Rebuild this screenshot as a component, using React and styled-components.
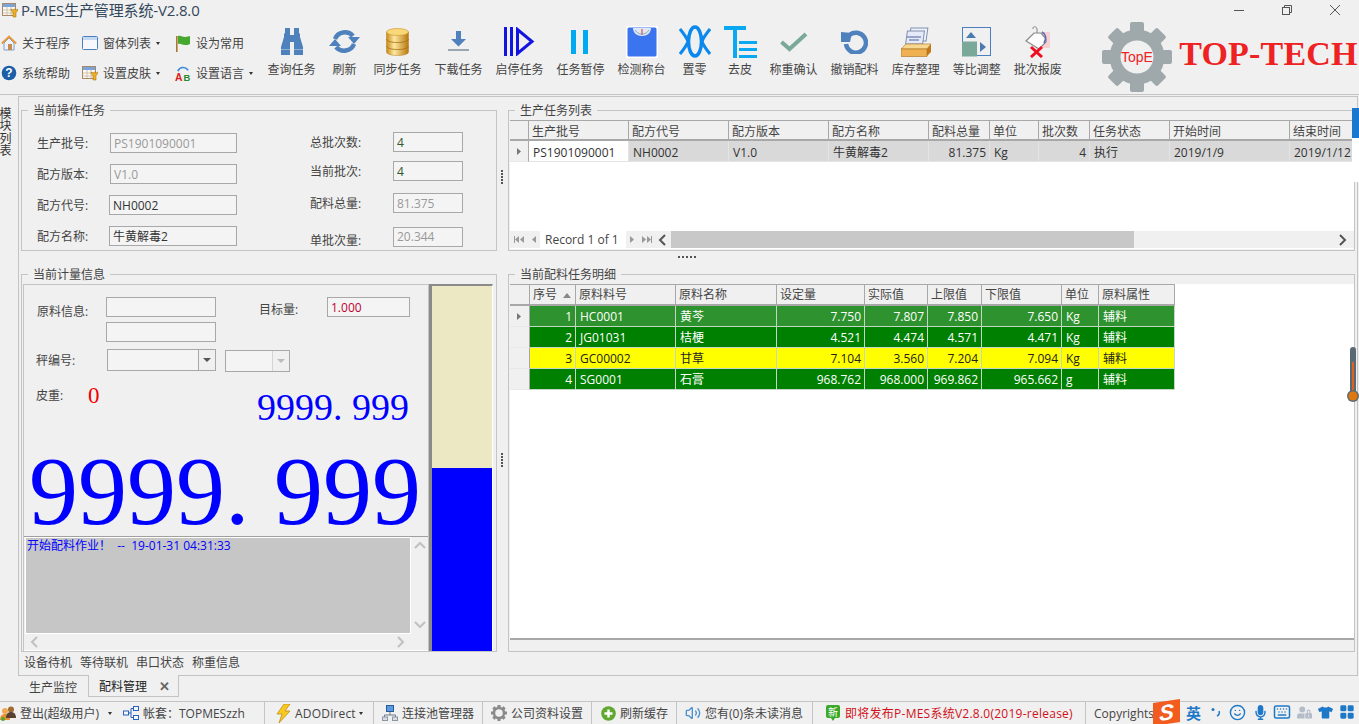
import React from "react";
import styled, { createGlobalStyle, css } from "styled-components";
import { Volume2, Smile, Keyboard, LayoutGrid } from "lucide-react";
import { FaMicrophone, FaTshirt, FaUserLock } from "react-icons/fa";

const GlobalStyle = createGlobalStyle`
  * { box-sizing: border-box; }
  html, body { margin: 0; padding: 0; background: #f0f0f0; }
  body {
    font-family: "Open Sans", "Noto Sans CJK SC", sans-serif;
    font-size: 12px;
    color: #444;
    overflow: hidden;
  }
`;

const line = "#c4c4c4";
const fieldLine = "#a8a8a8";

const Page = styled.div`
  position: relative;
  display: flex;
  flex-direction: column;
  width: 1359px;
  height: 724px;
  overflow: hidden;
`;

/* title bar */
const TitleBar = styled.div`
  display: flex;
  align-items: center;
  height: 20px;
  padding-left: 2px;
`;

const TitleText = styled.div`
  margin-left: 3px;
  font-size: 15px;
  line-height: 18px;
  letter-spacing: -0.15px;
  color: #33475b;
  white-space: nowrap;
`;

const WindowButtons = styled.div`
  display: flex;
  margin-left: auto;
`;

const WindowButton = styled.div`
  display: flex;
  align-items: center;
  justify-content: center;
  width: 48px;
  height: 18px;
`;

/* ribbon */
const Ribbon = styled.div`
  display: flex;
  height: 75px;
  border-bottom: 1px solid ${line};
`;

const QuickGrid = styled.div`
  display: grid;
  grid-template-columns: 81px 93px 87px;
  grid-template-rows: 30px 30px;
  width: 261px;
  padding: 8px 0 0 1px;
`;

const QuickItem = styled.div`
  display: flex;
  align-items: center;
  white-space: nowrap;
  svg:first-child { flex: none; margin-right: 5px; }
`;

const Caret = styled.span`
  display: inline-block;
  width: 0;
  height: 0;
  margin-left: ${p => p.$gap ?? 5}px;
  border-left: 2.5px solid transparent;
  border-right: 2.5px solid transparent;
  border-top: 3px solid #333;
`;

const ToolButton = styled.div`
  display: flex;
  flex-direction: column;
  align-items: center;
  min-width: 45px;
  padding: 5px 6.5px 0;
`;

const ToolIcon = styled.div`
  display: flex;
  align-items: center;
  justify-content: center;
  height: 33px;
`;

const ToolLabel = styled.div`
  margin-top: 4px;
  line-height: 16px;
  white-space: nowrap;
`;

const Logo = styled.div`
  display: flex;
  margin-left: 34px;
  padding-top: 2px;
`;

const LogoText = styled.div`
  margin: 13px 0 0 7px;
  font-family: "Liberation Serif", serif;
  font-weight: bold;
  font-size: 34px;
  line-height: 38px;
  letter-spacing: 0.2px;
  color: #ee2222;
  white-space: nowrap;
`;

/* main area */
const Main = styled.div`
  display: flex;
  height: 580px;
  margin-top: 1px;
`;

const SideTab = styled.div`
  flex: none;
  width: 18px;
  margin-left: -7px;
  padding-top: 11px;
  writing-mode: vertical-rl;
  line-height: 14px;
  letter-spacing: 0.5px;
  color: #333;
`;

const Panel = styled.div`
  display: grid;
  grid-template-columns: 476px 11px 847px;
  grid-template-rows: 148px 16px 385px 1fr;
  flex: none;
  width: 1340px;
  margin-left: 7px;
  padding: 6px 0 0 2px;
  border: 1px solid ${line};
`;

const Group = styled.fieldset`
  display: flex;
  flex-direction: column;
  min-width: 0;
  margin: 0;
  padding: 0;
  border: 1px solid ${line};
`;

const GroupTitle = styled.legend`
  margin-left: 6px;
  padding: 0 5px;
  line-height: 15px;
  white-space: nowrap;
`;

const VSplit = styled.div`
  display: flex;
  align-items: center;
  justify-content: center;
  padding-right: 1px;
  font-size: 0;
  svg { display: block; }
`;

const HSplit = styled.div`
  grid-column: 1 / 4;
  padding: 5px 0 0 657px;
  svg { display: block; }
`;

const Footer = styled.div`
  grid-column: 1 / 4;
  display: flex;
  gap: 8px;
  align-items: center;
  padding: 0 0 3px 3px;
`;

/* fields */
const TaskForm = styled.div`
  display: flex;
  padding: 15px 0 0 15px;
`;

const FormColumn = styled.div`
  display: flex;
  flex-direction: column;
  width: ${p => p.$w}px;
`;

const Field = styled.div`
  display: flex;
  align-items: center;
  margin-top: ${p => p.$top || 0}px;
  padding-left: ${p => p.$left || 0}px;
`;

const FieldLabel = styled.div`
  flex: none;
  width: ${p => p.$w}px;
  padding-top: ${p => p.$drop || 0}px;
  line-height: 15px;
  white-space: nowrap;
`;

const TextBox = styled.input`
  display: block;
  width: ${p => p.$w}px;
  height: 20px;
  margin: 0;
  padding: 0 3px;
  border: 1px solid ${fieldLine};
  border-radius: 0;
  outline: none;
  background: #f4f4f4;
  font: inherit;
  color: ${p => p.$color || "#333"};
`;

/* data grid */
const GridFrame = styled.div`
  display: flex;
  flex-direction: column;
  height: ${p => p.$h}px;
  margin: 2px 0 0 1px;
  overflow: hidden;
  background: #fff;
  ${p => p.$ruled && css`
    border-bottom: 2px solid #a8a8a8;
  `}
`;

const GridBody = styled.div`
  flex: 1;
  overflow: hidden;
`;

const Table = styled.table`
  table-layout: fixed;
  width: ${p => p.$w}px;
  border-collapse: separate;
  border-spacing: 0;
  line-height: 15px;
`;

const HeadCell = styled.th`
  position: relative;
  height: ${p => p.$h}px;
  padding: ${p => p.$low ? "2px" : "0"} 3px 0;
  border-top: 1px solid #a8a8a8;
  border-right: 1px solid #a8a8a8;
  border-bottom: 2px solid #a8a8a8;
  background: #f0f0f0;
  font-weight: normal;
  text-align: left;
  white-space: nowrap;
`;

const RowHead = styled.th`
  padding: 0 0 0 7px;
  border-right: 1px solid #a8a8a8;
  border-bottom: 1px solid #e8e8e8;
  background: #f0f0f0;
  text-align: left;
  svg { display: block; }
`;

const toneStyles = {
  task: css`
    td { padding-top: 2px; background: #d9d9d9; color: #333; border-color: #e4e4e4; }
    td:first-of-type { background: #fff; }
  `,
  picked: css`td { background: #2e922e; color: #fff; }`,
  green: css`td { background: #008000; color: #fff; }`,
  yellow: css`td { background: #ffff00; color: #222; }`,
};

const DataRow = styled.tr`
  ${p => toneStyles[p.$tone]}
`;

const DataCell = styled.td`
  height: 21px;
  padding: 0 3px 0 4px;
  border-right: 1px solid #c6d6c6;
  border-bottom: 1px solid #c6d6c6;
  text-align: ${p => (p.$right ? "right" : "left")};
  white-space: nowrap;
  overflow: hidden;
`;

const SortMark = styled.span`
  position: absolute;
  top: 8px;
  right: 4px;
  border-left: 4px solid transparent;
  border-right: 4px solid transparent;
  border-bottom: 5px solid #888;
`;

const Navigator = styled.div`
  display: flex;
  align-items: center;
  flex: none;
  height: 17px;
  margin-bottom: 1px;
  background: #f0f0f0;
`;

const NavGroup = styled.div`
  display: flex;
  align-items: center;
  justify-content: space-around;
  flex: none;
  width: ${p => p.$w}px;
  height: 100%;
`;

const RecordLabel = styled.div`
  flex: none;
  width: 86px;
  height: 100%;
  padding-left: 5px;
  background: #fff;
  line-height: 18px;
  white-space: nowrap;
`;

const ScrollThumb = styled.div`
  flex: none;
  width: ${p => p.$w}px;
  height: 100%;
  background: #c8c8c8;
`;

const ScrollEnd = styled.div`
  display: flex;
  justify-content: flex-end;
  flex: 1;
  padding-right: 4px;
`;

/* measure group */
const MeasureBody = styled.div`
  display: flex;
  flex: 1;
  margin: 2px 0 0 1px;
  min-height: 0;
`;

const MeasurePanel = styled.div`
  display: flex;
  flex-direction: column;
  width: 406px;
  padding-top: 12px;
  border: 1px solid ${line};
  border-bottom: 0;
`;

const MeasureRow = styled.div`
  display: flex;
  align-items: ${p => p.$align || "flex-start"};
  margin-top: ${p => p.$top || 0}px;
  padding-left: ${p => p.$left ?? 13}px;
`;

const TextStack = styled.div`
  display: flex;
  flex-direction: column;
  gap: 5px;
`;

const ComboBox = styled.div`
  display: flex;
  flex: none;
  width: ${p => p.$w}px;
  height: 22px;
  margin: ${p => p.$margin || "0"};
  border: 1px solid ${fieldLine};
  background: #f4f4f4;
`;

const ComboArrow = styled.div`
  display: flex;
  align-items: center;
  justify-content: center;
  width: 17px;
  height: 100%;
  margin-left: auto;
  border-left: 1px solid ${p => (p.$off ? "#d4d4d4" : fieldLine)};
  background: #f0f0f0;
`;

const ArrowDown = styled.span`
  border-left: 4px solid transparent;
  border-right: 4px solid transparent;
  border-top: 4px solid ${p => (p.$off ? "#bbb" : "#555")};
`;

const TareValue = styled.div`
  margin-left: 1px;
  font-family: "Liberation Serif", serif;
  font-size: 23px;
  line-height: 20px;
  color: #f00000;
`;

const SmallWeight = styled.div`
  margin: 2px 19px 0 auto;
  font-family: "Liberation Serif", serif;
  font-size: 38px;
  line-height: 38px;
  color: #0000ff;
  white-space: pre;
`;

const BigWeight = styled.div`
  margin: 20px 0 0 5px;
  font-family: "Liberation Serif", serif;
  font-size: 98px;
  line-height: 90px;
  color: #0000ff;
  white-space: pre;
`;

const LogArea = styled.div`
  display: grid;
  grid-template-columns: 1fr 17px;
  grid-template-rows: 1fr 16px;
  height: 115px;
  margin-top: auto;
  padding-left: 1px;
  border-top: 1px solid #a0a0a0;
  border-bottom: 1px solid #fff;
`;

const LogText = styled.div`
  padding: 0 1px;
  border: 1px solid #fff;
  background: #c6c6c6;
  line-height: 15px;
  color: #0000ff;
  white-space: pre;
`;

const LogScrollV = styled.div`
  display: flex;
  flex-direction: column;
  align-items: center;
  justify-content: space-between;
  padding: 4px 0 2px;
`;

const LogScrollH = styled.div`
  display: flex;
  align-items: center;
  justify-content: space-between;
  padding: 0 3px 0 5px;
`;

const LevelBar = styled.div`
  display: flex;
  flex-direction: column;
  width: 64px;
  border-top: 2px solid #8a8a8a;
  border-left: 3px solid #8a8a8a;
  border-right: 1px solid #fff;
`;

const LevelEmpty = styled.div`
  flex: 1;
  background: #ece8c4;
`;

const LevelFill = styled.div`
  background: #0000ff;
`;

/* tabs */
const TabBar = styled.div`
  display: flex;
  flex: none;
  height: 21px;
  margin-left: 18px;
`;

const Tab = styled.div`
  display: flex;
  align-items: center;
  width: ${p => p.$w}px;
  height: 22px;
  padding-left: 11px;
  ${p => p.$active && css`
    margin-top: -1px;
    padding-left: 10px;
    border: 1px solid ${line};
    border-top: 0;
    background: #f0f0f0;
    color: #222;
  `}
`;

const TabClose = styled.span`
  margin-left: 12px;
  font-size: 13px;
  font-weight: bold;
  color: #666;
`;

/* status bar */
const StatusBar = styled.div`
  display: flex;
  align-items: center;
  flex: none;
  height: 23px;
  margin-top: 4px;
  border-top: 1px solid ${line};
`;

const StatusItem = styled.div`
  display: flex;
  align-items: center;
  flex: none;
  gap: 4px;
  width: ${p => (p.$w ? `${p.$w}px` : "auto")};
  height: 100%;
  padding: ${p => p.$pad || "0 8px"};
  letter-spacing: ${p => p.$track || 0}px;
  white-space: nowrap;
  color: ${p => p.$color || "#444"};
  ${p => p.$sep && css`
    border-right: 1px solid ${line};
  `}
`;

const ImeBar = styled.div`
  position: absolute;
  left: 1153px;
  top: 700px;
  display: flex;
  align-items: center;
  height: 24px;
`;

const ImeLogo = styled.div`
  display: flex;
  align-items: center;
  justify-content: center;
  width: 27px;
  height: 23px;
  margin-right: 6px;
  background: #f25c1e;
  transform: skewY(-8deg);
  font-family: "Liberation Sans", sans-serif;
  font-size: 22px;
  font-weight: bold;
  font-style: italic;
  color: #fff;
`;

const ImeText = styled.div`
  width: 21px;
  font-size: 15px;
  font-weight: bold;
  color: #1e78c8;
`;

const ImeIcon = styled.div`
  display: flex;
  align-items: center;
  justify-content: center;
  width: ${p => p.$w}px;
  color: ${p => p.$color || "#1e78c8"};
`;

/* things lying over the right edge */
const DockTab = styled.div`
  position: absolute;
  left: 1352px;
  top: 108px;
  width: 7px;
  height: 74px;
  background: linear-gradient(#1a78d0 0, #1a78d0 30px, #fff 30px);
`;

const Thermo = styled.svg`
  position: absolute;
  left: 1346px;
  top: 346px;
`;

/* drawings */
const blue = "#4f81bd";

const HomeIcon = () => (
  <svg width="16" height="16" viewBox="0 0 16 16">
    <path d="M3 8v7h10V8L8 3z" fill="#eef3fa" stroke="#7fa0c8" />
    <path d="M0.8 8.5 8 1.5l7.2 7" fill="none" stroke="#e89a3c" strokeWidth="1.8" />
    <rect x="7" y="9" width="4" height="6" fill="#c88a50" />
  </svg>
);

const WindowIcon = () => (
  <svg width="16" height="16" viewBox="0 0 16 16">
    <rect x="0.5" y="1.5" width="15" height="13" rx="1" fill="#f6f8fc" stroke="#4a80c0" />
    <rect x="1" y="2" width="14" height="3" fill="#c4d8f0" />
  </svg>
);

const FlagIcon = () => (
  <svg width="16" height="17" viewBox="0 0 16 17">
    <rect x="1" y="1" width="1.6" height="16" fill="#a87830" />
    <path d="M3 1c3-1 4 1 7 1 2 0 4-1 5-1v8c-2 1-3 1-5 1-3 0-4-2-7-1z" fill="#46a82e" />
  </svg>
);

const HelpIcon = () => (
  <svg width="16" height="16" viewBox="0 0 16 16">
    <circle cx="8" cy="8" r="7.3" fill="#1c5ea8" />
    <text x="8" y="12.4" textAnchor="middle" fontSize="12" fontWeight="bold" fontFamily="Liberation Sans" fill="#fff">?</text>
  </svg>
);

const SkinIcon = () => (
  <svg width="16" height="16" viewBox="0 0 16 16">
    <rect x="0.5" y="1.5" width="13" height="12" fill="#fbf8f2" stroke="#a88868" />
    <rect x="1" y="2" width="12" height="3" fill="#7ba4d8" />
    <path d="M1 8h12M1 11h12M5 5v8M9 5v8" stroke="#c8b8a0" strokeWidth="0.8" />
    <path d="M9 7c0 2 1 3 2 3v5h3v-5c1 0 2-1 2-3l-2 1-1.500-1-1.500 1z" fill="#f0b020" stroke="#9a6a10" strokeWidth="0.5" />
  </svg>
);

const LangIcon = () => (
  <svg width="16" height="17" viewBox="0 0 17 17">
    <path d="M3 6C5 1 11 1 14 5" fill="none" stroke="#3a8ad8" strokeWidth="1.8" />
    <text x="0" y="16" fontSize="11" fontWeight="bold" fontFamily="Liberation Sans" fill="#d82020">A</text>
    <text x="9" y="16" fontSize="10" fontWeight="bold" fontFamily="Liberation Sans" fill="#2a8a2a">B</text>
  </svg>
);

const BinocularsIcon = () => (
  <svg width="24" height="27" viewBox="0 0 24 27">
    <path d="M5 0h5v7h4V0h5v5l1 1v3l3 10v8H14V14h-4v13H1v-8l3-10V6l1-1z" fill={blue} />
    <path d="M1 21.500h9M14 21.500h9" stroke="#8fb0d8" strokeWidth="1" />
  </svg>
);

const RefreshIcon = () => (
  <svg width="31" height="23" viewBox="0 0 31 23">
    <path d="M6 9A10.500 10 0 0 1 24 6" fill="none" stroke={blue} strokeWidth="4.500" />
    <path d="M25 14A10.500 10 0 0 1 7 17" fill="none" stroke={blue} strokeWidth="4.500" />
    <path d="M19 7h12l-6 7z" fill={blue} />
    <path d="M0 16h12L6 9z" fill={blue} />
  </svg>
);

const DatabaseIcon = () => (
  <svg width="23" height="28" viewBox="0 0 23 28">
    <defs>
      <linearGradient id="gold" x1="0" x2="1" y1="0" y2="0">
        <stop offset="0" stopColor="#c88818" />
        <stop offset="0.35" stopColor="#fde8a0" />
        <stop offset="1" stopColor="#b87810" />
      </linearGradient>
    </defs>
    <path d="M0.500 4v20c0 2 4.500 3.500 11 3.500s11-1.500 11-3.500V4z" fill="url(#gold)" stroke="#b88020" strokeWidth="0.5" />
    <ellipse cx="11.500" cy="4" rx="11" ry="3.500" fill="#f8d878" stroke="#c89028" strokeWidth="0.6" />
    <path d="M0.500 11c0 2 4.500 3.500 11 3.500s11-1.500 11-3.500M0.500 18c0 2 4.500 3.500 11 3.500s11-1.500 11-3.500" fill="none" stroke="#a87010" strokeWidth="0.8" />
  </svg>
);

const DownloadIcon = () => (
  <svg width="21" height="21" viewBox="0 0 21 21">
    <path d="M8 0h5v8h5l-7.500 7.500L3 8h5z" fill={blue} />
    <rect y="18" width="21" height="2" fill="#9aa6b0" />
  </svg>
);

const StartStopIcon = () => (
  <svg width="31" height="29" viewBox="0 0 31 29">
    <rect width="3" height="29" fill="#1414e0" />
    <rect x="6" width="3" height="29" fill="#1414e0" />
    <path d="M13.500 2.500v24L28 14.500z" fill="none" stroke="#1414e0" strokeWidth="3" />
  </svg>
);

const PauseIcon = () => (
  <svg width="19" height="24" viewBox="0 0 19 24">
    <rect width="5" height="24" fill="#00aaf0" />
    <rect x="12" width="5" height="24" fill="#00aaf0" />
  </svg>
);

const ScaleIcon = () => (
  <svg width="32" height="32" viewBox="0 0 32 32">
    <rect width="32" height="32" fill="#fff" />
    <rect x="1.500" y="1.500" width="29" height="29" rx="1.500" fill="#3a74ee" />
    <path d="M7 2h18c0 5-4 8-9 8s-9-3-9-8z" fill="#dfe8f4" />
    <path d="M16 3v6" stroke="#e05050" strokeWidth="1.200" />
    <path d="M9 4c2 3 4 4 7 4s5-1 7-4" fill="none" stroke="#8098b8" strokeWidth="0.800" />
  </svg>
);

const ZeroIcon = () => (
  <svg width="32" height="33" viewBox="0 0 32 33" fill="none" stroke="#0a88ee">
    <ellipse cx="16" cy="16.500" rx="6.500" ry="14.500" strokeWidth="3.500" />
    <path d="M1 4c4 5 7 9 8 12.500C8 20 5 24 1 29M31 4c-4 5-7 9-8 12.500 1 3.500 4 7.500 8 12.500" strokeWidth="3" />
  </svg>
);

const TareIcon = () => (
  <svg width="33" height="32" viewBox="0 0 33 32" fill="#0aa8f0">
    <rect width="22" height="4" />
    <rect x="9" width="4" height="32" />
    <rect x="15" y="15" width="18" height="3" />
    <rect x="15" y="22" width="18" height="3" />
    <rect x="15" y="29" width="18" height="3" />
  </svg>
);

const CheckIcon = () => (
  <svg width="28" height="20" viewBox="0 0 28 20">
    <path d="M1.500 10 9.500 17 26 2" fill="none" stroke="#7aa899" strokeWidth="4" />
  </svg>
);

const UndoIcon = () => (
  <svg width="27" height="25" viewBox="0 0 27 25">
    <path d="M8 6.500A10 10 0 1 1 5 15" fill="none" stroke={blue} strokeWidth="4.500" />
    <path d="M0 3l11 1-2 9H0z" fill={blue} />
  </svg>
);

const StorageIcon = () => (
  <svg width="30" height="30" viewBox="0 0 30 30">
    <rect x="10" y="1" width="17" height="13" fill="#eef2fa" stroke="#8090b0" transform="skewX(-8)" />
    <rect x="7" y="4" width="17" height="13" fill="#e4eaf8" stroke="#8090b0" transform="skewX(-8)" />
    <path d="M6 10h14M8 13h10" stroke="#5060a0" />
    <path d="M0 22l5-5h25l-4 5z" fill="#f8d890" stroke="#a87020" strokeWidth="0.6" />
    <path d="M26 22l4-5v8l-4 4z" fill="#c07818" />
    <rect y="22" width="26" height="7.500" fill="#eeb050" stroke="#a87020" strokeWidth="0.6" />
  </svg>
);

const RatioIcon = () => (
  <svg width="30" height="30" viewBox="0 0 30 30">
    <rect x="0.500" y="0.500" width="28" height="28" fill="none" stroke="#4a80c0" />
    <rect y="14.500" width="15" height="15" fill="#7aa899" />
    <path d="M4 11h10L9 5z" fill="#4a7ab0" />
    <path d="M18 15v10l6-5z" fill="#4a7ab0" />
  </svg>
);

const ScrapIcon = () => (
  <svg width="26" height="32" viewBox="0 0 26 32">
    <rect x="17" y="6" width="8" height="16" fill="#f8d0d4" />
    <path d="M8 3c-1-3 4-3 4 0v5" fill="none" stroke="#888" />
    <path d="M1 15 9 7h7l5 6v3l-7 7z" fill="#fdfdfd" stroke="#888" strokeWidth="1.200" />
    <path d="M17 6c4 2 5 6 2 11" fill="none" stroke="#5a6ab0" strokeWidth="1.500" />
    <path d="M6 21l11 10M17 21 6 31" stroke="#ee1020" strokeWidth="3" />
  </svg>
);

const teeth = [0, 45, 90, 135, 180, 225, 270, 315];

const Gear = ({ size, color, hole = "#f0f0f0", children }) => (
  <svg width={size} height={size} viewBox="0 0 70 70">
    {teeth.map(a => (
      <rect key={a} x="28" y="0" width="14" height="14" rx="2" fill={color} transform={`rotate(${a} 35 35)`} />
    ))}
    <circle cx="35" cy="35" r="27.500" fill={color} />
    <circle cx="35" cy="35" r="16.500" fill={hole} />
    {children}
  </svg>
);

const UsersIcon = () => (
  <svg width="16" height="16" viewBox="0 0 16 16">
    <circle cx="5" cy="6" r="3" fill="#f0a850" />
    <path d="M0 15c0-4 2-6 5-6s5 2 5 6z" fill="#e89030" />
    <circle cx="11" cy="4.500" r="3" fill="#a06a30" />
    <path d="M6 13c0-4 2-6 5-6s5 2 5 6z" fill="#5a4030" />
    <circle cx="3" cy="14" r="2" fill="#50a830" />
  </svg>
);

const TreeIcon = () => (
  <svg width="16" height="14" viewBox="0 0 16 14" fill="#f4f8fc" stroke="#2a60c0">
    <rect x="0.500" y="5" width="5" height="4" />
    <rect x="10.500" y="0.500" width="5" height="4" />
    <rect x="10.500" y="9.500" width="5" height="4" />
    <path d="M5.500 7H8V2.500h2.500M8 7v4.500h2.500" fill="none" />
  </svg>
);

const BoltIcon = () => (
  <svg width="15" height="19" viewBox="0 0 15 19">
    <path d="M8 0h6L9 7h5L3 19l3-9H1z" fill="#f8c820" stroke="#b88810" strokeWidth="0.700" />
  </svg>
);

const NetworkIcon = () => (
  <svg width="16" height="16" viewBox="0 0 16 16">
    <rect x="4.500" y="0.500" width="7" height="6" fill="#5a9ae0" stroke="#2a5a9a" />
    <path d="M8 7v3M2.500 12v-2h11v2" fill="none" stroke="#6a7a8a" />
    <rect x="0.500" y="12" width="5" height="3.500" fill="#d8dce4" stroke="#8a96a4" />
    <rect x="10.500" y="12" width="5" height="3.500" fill="#d8dce4" stroke="#8a96a4" />
  </svg>
);

const PlusIcon = () => (
  <svg width="15" height="15" viewBox="0 0 15 15">
    <circle cx="7.500" cy="7.500" r="7.300" fill="#60a830" />
    <path d="M7.500 3.500v8M3.500 7.500h8" stroke="#fff" strokeWidth="2.400" />
  </svg>
);

const NewsIcon = () => (
  <svg width="16" height="18" viewBox="0 0 16 18">
    <path d="M3 1h10a2 2 0 0 1 2 2v9a2 2 0 0 1-2 2h-3l-2 3-2-3H3a2 2 0 0 1-2-2V3a2 2 0 0 1 2-2z" fill="#3aa828" />
    <text x="8" y="11.500" textAnchor="middle" fontSize="10" fontFamily="Noto Sans CJK SC" fill="#fff">新</text>
  </svg>
);

const SmallTri = ({ dir = "right", color = "#666", double }) => (
  <svg width={double ? 10 : 5} height="7" viewBox={double ? "0 0 10 7" : "0 0 5 7"}>
    {dir === "right" ? (
      <>
        <path d="M0 0l4 3.500L0 7z" fill={color} />
        {double && <path d="M5 0l4 3.500L5 7zM9 0h1v7H9z" fill={color} />}
      </>
    ) : (
      <>
        {double && <path d="M0 0h1v7H0zM5 0L1 3.500 5 7z" fill={color} />}
        <path d={double ? "M10 0L6 3.500 10 7z" : "M5 0L1 3.500 5 7z"} fill={color} />
      </>
    )}
  </svg>
);

const Chevron = ({ d, color = "#c0c0c0" }) => {
  const paths = { up: "M1 7l5-5 5 5", down: "M1 2l5 5 5-5", left: "M7 1 2 6l5 5", right: "M2 1l5 5-5 5" };
  return (
    <svg width="12" height="12" viewBox="0 0 12 12">
      <path d={paths[d]} fill="none" stroke={color} strokeWidth="2" />
    </svg>
  );
};

const quickItems = [
  { icon: <HomeIcon />, text: "关于程序" },
  { icon: <WindowIcon />, text: "窗体列表", caret: true },
  { icon: <FlagIcon />, text: "设为常用" },
  { icon: <HelpIcon />, text: "系统帮助" },
  { icon: <SkinIcon />, text: "设置皮肤", caret: true },
  { icon: <LangIcon />, text: "设置语言", caret: true },
];

const tools = [
  { icon: <BinocularsIcon />, text: "查询任务" },
  { icon: <RefreshIcon />, text: "刷新" },
  { icon: <DatabaseIcon />, text: "同步任务" },
  { icon: <DownloadIcon />, text: "下载任务" },
  { icon: <StartStopIcon />, text: "启停任务" },
  { icon: <PauseIcon />, text: "任务暂停" },
  { icon: <ScaleIcon />, text: "检测称台" },
  { icon: <ZeroIcon />, text: "置零" },
  { icon: <TareIcon />, text: "去皮" },
  { icon: <CheckIcon />, text: "称重确认" },
  { icon: <UndoIcon />, text: "撤销配料" },
  { icon: <StorageIcon />, text: "库存整理" },
  { icon: <RatioIcon />, text: "等比调整" },
  { icon: <ScrapIcon />, text: "批次报废" },
];

const taskColumns = [
  { title: "生产批号", w: 100 },
  { title: "配方代号", w: 100 },
  { title: "配方版本", w: 100 },
  { title: "配方名称", w: 100 },
  { title: "配料总量", w: 61, right: true },
  { title: "单位", w: 49 },
  { title: "批次数", w: 51, right: true },
  { title: "任务状态", w: 80 },
  { title: "开始时间", w: 120 },
  { title: "结束时间", w: 120 },
];

const taskRows = [
  { tone: "task", cells: ["PS1901090001", "NH0002", "V1.0", "牛黄解毒2", "81.375", "Kg", "4", "执行", "2019/1/9", "2019/1/12"] },
];

const detailColumns = [
  { title: "序号", w: 46, right: true, sorted: true },
  { title: "原料料号", w: 100 },
  { title: "原料名称", w: 101 },
  { title: "设定量", w: 88, right: true },
  { title: "实际值", w: 63, right: true },
  { title: "上限值", w: 54, right: true },
  { title: "下限值", w: 80, right: true },
  { title: "单位", w: 37 },
  { title: "原料属性", w: 76 },
];

const detailRows = [
  { tone: "picked", cells: ["1", "HC0001", "黄芩", "7.750", "7.807", "7.850", "7.650", "Kg", "辅料"] },
  { tone: "green", cells: ["2", "JG01031", "桔梗", "4.521", "4.474", "4.571", "4.471", "Kg", "辅料"] },
  { tone: "yellow", cells: ["3", "GC00002", "甘草", "7.104", "3.560", "7.204", "7.094", "Kg", "辅料"] },
  { tone: "green", cells: ["4", "SG0001", "石膏", "968.762", "968.000", "969.862", "965.662", "g", "辅料"] },
];

const DataGrid = ({ columns, rows, headHeight, headWidth, lowHead }) => {
  const width = headWidth + columns.reduce((sum, c) => sum + c.w, 0);
  return (
    <Table $w={width}>
      <colgroup>
        <col style={{ width: headWidth }} />
        {columns.map(c => <col key={c.title} style={{ width: c.w }} />)}
      </colgroup>
      <thead>
        <tr>
          <HeadCell $h={headHeight} />
          {columns.map(c => (
            <HeadCell key={c.title} $h={headHeight} $low={lowHead}>
              {c.title}
              {c.sorted && <SortMark />}
            </HeadCell>
          ))}
        </tr>
      </thead>
      <tbody>
        {rows.map((row, i) => (
          <DataRow key={i} $tone={row.tone}>
            <RowHead>{i === 0 && <SmallTri color="#777" />}</RowHead>
            {row.cells.map((cell, j) => (
              <DataCell key={j} $right={columns[j].right}>{cell}</DataCell>
            ))}
          </DataRow>
        ))}
      </tbody>
    </Table>
  );
};

const Dots = ({ vertical }) => (
  <svg width={vertical ? 2 : 19} height={vertical ? 14 : 2}>
    {[0, 1, 2, 3, 4].map(i => (
      <rect key={i} x={vertical ? 0 : i * 4} y={vertical ? i * 3 : 0} width="2" height="2" fill="#555" />
    ))}
  </svg>
);

export default function App() {
  return (
    <Page>
      <GlobalStyle />
      <TitleBar>
        <SkinIcon />
        <TitleText>P-MES生产管理系统-V2.8.0</TitleText>
        <WindowButtons>
          <WindowButton>
            <svg width="10" height="10"><path d="M0 5.500h10" stroke="#555" /></svg>
          </WindowButton>
          <WindowButton>
            <svg width="10" height="10" fill="none" stroke="#555">
              <path d="M2.500 2.500V.5h7v7h-2" />
              <rect x="0.500" y="2.500" width="7" height="7" />
            </svg>
          </WindowButton>
          <WindowButton>
            <svg width="10" height="10"><path d="M0 0l10 10M10 0 0 10" stroke="#555" /></svg>
          </WindowButton>
        </WindowButtons>
      </TitleBar>

      <Ribbon>
        <QuickGrid>
          {quickItems.map(item => (
            <QuickItem key={item.text}>
              {item.icon}
              {item.text}
              {item.caret && <Caret />}
            </QuickItem>
          ))}
        </QuickGrid>
        {tools.map(tool => (
          <ToolButton key={tool.text}>
            <ToolIcon>{tool.icon}</ToolIcon>
            <ToolLabel>{tool.text}</ToolLabel>
          </ToolButton>
        ))}
        <Logo>
          <Gear size={70} color="#9fa9ab">
            <text x="35" y="40" textAnchor="middle" fontSize="14" fontFamily="Liberation Sans" fill="#ee2222">TopE</text>
          </Gear>
          <LogoText>TOP-TECH</LogoText>
        </Logo>
      </Ribbon>

      <Main>
        <SideTab>模块列表</SideTab>
        <Panel>
          <Group>
            <GroupTitle>当前操作任务</GroupTitle>
            <TaskForm>
              <FormColumn $w={273}>
                <Field>
                  <FieldLabel $w={73}>生产批号:</FieldLabel>
                  <TextBox $w={127} readOnly value="PS1901090001" $color="#999" />
                </Field>
                <Field $top={11}>
                  <FieldLabel $w={73}>配方版本:</FieldLabel>
                  <TextBox $w={127} readOnly value="V1.0" $color="#999" />
                </Field>
                <Field $top={11}>
                  <FieldLabel $w={72}>配方代号:</FieldLabel>
                  <TextBox $w={128} readOnly value="NH0002" />
                </Field>
                <Field $top={11}>
                  <FieldLabel $w={72}>配方名称:</FieldLabel>
                  <TextBox $w={128} readOnly value="牛黄解毒2" />
                </Field>
              </FormColumn>
              <FormColumn $w={153}>
                <Field $top={-1}>
                  <FieldLabel $w={83}>总批次数:</FieldLabel>
                  <TextBox $w={70} readOnly value="4" $color="#2d5a2d" />
                </Field>
                <Field $top={9}>
                  <FieldLabel $w={83}>当前批次:</FieldLabel>
                  <TextBox $w={70} readOnly value="4" $color="#2d5a2d" />
                </Field>
                <Field $top={12}>
                  <FieldLabel $w={83}>配料总量:</FieldLabel>
                  <TextBox $w={70} readOnly value="81.375" $color="#999" />
                </Field>
                <Field $top={12}>
                  <FieldLabel $w={83} $drop={8}>单批次量:</FieldLabel>
                  <TextBox $w={70} readOnly value="20.344" $color="#999" />
                </Field>
              </FormColumn>
            </TaskForm>
          </Group>

          <VSplit><Dots vertical /></VSplit>

          <Group>
            <GroupTitle>生产任务列表</GroupTitle>
            <GridFrame $h={129}>
              <GridBody>
                <DataGrid columns={taskColumns} rows={taskRows} headHeight={21} headWidth={19} lowHead />
              </GridBody>
              <Navigator>
                <NavGroup $w={30}>
                  <SmallTri dir="left" double color="#999" />
                  <SmallTri dir="left" color="#999" />
                </NavGroup>
                <RecordLabel>Record 1 of 1</RecordLabel>
                <NavGroup $w={30}>
                  <SmallTri color="#999" />
                  <SmallTri double color="#999" />
                </NavGroup>
                <NavGroup $w={15}><Chevron d="left" color="#555" /></NavGroup>
                <ScrollThumb $w={463} />
                <ScrollEnd><Chevron d="right" color="#555" /></ScrollEnd>
              </Navigator>
            </GridFrame>
          </Group>

          <HSplit><Dots /></HSplit>

          <Group>
            <GroupTitle>当前计量信息</GroupTitle>
            <MeasureBody>
              <MeasurePanel>
                <MeasureRow>
                  <FieldLabel $w={69}>
                    <Field $top={7}>原料信息:</Field>
                  </FieldLabel>
                  <TextStack>
                    <TextBox $w={110} readOnly value="" />
                    <TextBox $w={110} readOnly value="" />
                  </TextStack>
                  <FieldLabel $w={111}>
                    <Field $top={5} $left={43}>目标量:</Field>
                  </FieldLabel>
                  <TextBox $w={83} readOnly value="1.000" $color="#c00030" />
                </MeasureRow>
                <MeasureRow $top={6} $left={12} $align="center">
                  <FieldLabel $w={71}>秤编号:</FieldLabel>
                  <ComboBox $w={109}>
                    <ComboArrow><ArrowDown /></ComboArrow>
                  </ComboBox>
                  <ComboBox $w={65} $margin="2px 0 0 9px">
                    <ComboArrow $off><ArrowDown $off /></ComboArrow>
                  </ComboBox>
                </MeasureRow>
                <MeasureRow $top={14} $left={12}>
                  <FieldLabel $w={51}>
                    <Field $top={2}>皮重:</Field>
                  </FieldLabel>
                  <TareValue>0</TareValue>
                  <SmallWeight>9999. 999</SmallWeight>
                </MeasureRow>
                <BigWeight>9999. 999</BigWeight>
                <LogArea>
                  <LogText>开始配料作业！  --  19-01-31 04:31:33</LogText>
                  <LogScrollV>
                    <Chevron d="up" />
                    <Chevron d="down" />
                  </LogScrollV>
                  <LogScrollH>
                    <Chevron d="left" />
                    <Chevron d="right" />
                  </LogScrollH>
                </LogArea>
              </MeasurePanel>
              <LevelBar>
                <LevelEmpty />
                <LevelFill style={{ height: 183 }} />
              </LevelBar>
            </MeasureBody>
          </Group>

          <VSplit><Dots vertical /></VSplit>

          <Group>
            <GroupTitle>当前配料任务明细</GroupTitle>
            <GridFrame $h={356} $ruled>
              <GridBody>
                <DataGrid columns={detailColumns} rows={detailRows} headHeight={22} headWidth={20} />
              </GridBody>
            </GridFrame>
          </Group>

          <Footer>
            <span>设备待机</span>
            <span>等待联机</span>
            <span>串口状态</span>
            <span>称重信息</span>
          </Footer>
        </Panel>
      </Main>

      <TabBar>
        <Tab $w={70}>生产监控</Tab>
        <Tab $w={91} $active>
          配料管理
          <TabClose>✕</TabClose>
        </Tab>
      </TabBar>

      <StatusBar>
        <StatusItem $w={123} $pad="0">
          <UsersIcon />
          登出(超级用户)
          <Caret />
        </StatusItem>
        <StatusItem $w={142} $pad="0" $sep>
          <TreeIcon />
          帐套：TOPMESzzh
        </StatusItem>
        <StatusItem $w={109} $pad="0 0 0 11px" $track={0.2} $sep>
          <BoltIcon />
          ADODirect
          <Caret $gap={-1} />
        </StatusItem>
        <StatusItem $sep>
          <NetworkIcon />
          连接池管理器
        </StatusItem>
        <StatusItem $sep>
          <Gear size={16} color="#8a8a8a" />
          公司资料设置
        </StatusItem>
        <StatusItem $pad="0 8px 0 9px" $sep>
          <PlusIcon />
          刷新缓存
        </StatusItem>
        <StatusItem $w={136} $sep>
          <Volume2 size={16} color="#4a90d0" />
          您有(0)条未读消息
        </StatusItem>
        <StatusItem $w={273} $pad="0 0 0 12px" $color="#d01020" $track={0.25} $sep>
          <NewsIcon />
          即将发布P-MES系统V2.8.0(2019-release)
        </StatusItem>
        <StatusItem>Copyrights</StatusItem>
      </StatusBar>

      <ImeBar>
        <ImeLogo>S</ImeLogo>
        <ImeText>英</ImeText>
        <ImeIcon $w={18}>
          <svg width="10" height="10" viewBox="0 0 10 10">
            <circle cx="2" cy="2.500" r="1.500" fill="#1e78c8" />
            <path d="M8 4c1 2 0 4-2 5" fill="none" stroke="#1e78c8" strokeWidth="1.500" />
          </svg>
        </ImeIcon>
        <ImeIcon $w={24}><Smile size={17} strokeWidth={2} /></ImeIcon>
        <ImeIcon $w={22}><FaMicrophone size={15} /></ImeIcon>
        <ImeIcon $w={22}><Keyboard size={18} strokeWidth={2} /></ImeIcon>
        <ImeIcon $w={22} $color="#b4bcc8"><FaUserLock size={15} /></ImeIcon>
        <ImeIcon $w={21}><FaTshirt size={15} /></ImeIcon>
        <ImeIcon $w={21}><LayoutGrid size={16} fill="#1e78c8" /></ImeIcon>
      </ImeBar>

      <DockTab />
      <Thermo width="13" height="57" viewBox="0 0 13 57">
        <rect x="4" y="1" width="6" height="48" rx="3" fill="#5a6a74" />
        <rect x="6" y="16" width="2" height="30" fill="#e06020" />
        <circle cx="7" cy="50" r="6" fill="#5a6a74" />
        <circle cx="7" cy="50" r="4.500" fill="#e07810" />
      </Thermo>
    </Page>
  );
}
